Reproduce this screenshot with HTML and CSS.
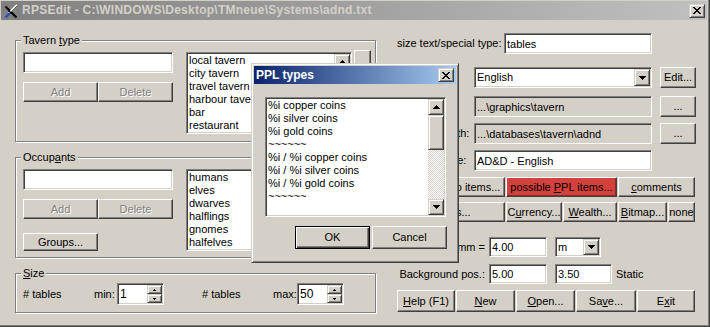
FILE: index.html
```html
<!DOCTYPE html>
<html lang="en">

<head>
	<meta charset="UTF-8">
	<title>RPSEdit</title>
	<link rel="stylesheet" href="styles.css">
</head>

<body>
	<div class="window">
		<div class="titlebar inactive">
			<svg class="app-icon" width="16" height="16" viewBox="0 0 16 16">
				<path d="M2.5 3.5l11 11" stroke="#000" stroke-width="2.2" />
				<path d="M14 2L6 10" stroke="#f4f4f4" stroke-width="2" />
				<path d="M14.5 2.5L6.5 10.5" stroke="#606060" stroke-width="1" />
				<path d="M5.5 7.5l3 3" stroke="#000" stroke-width="1.5" />
				<path d="M6.5 10.5L2.5 14.5" stroke="#2848c8" stroke-width="2.4" />
			</svg>
			<span class="title">RPSEdit - C:\WINDOWS\Desktop\TMneue\Systems\adnd.txt</span>
			<button class="caption-btn">
				<svg width="8" height="7" viewBox="0 0 8 7"><path d="M0 0h2v1H0zM6 0h2v1H6zM1 1h2v1H1zM5 1h2v1H5zM2 2h4v1H2zM3 3h2v1H3zM2 4h4v1H2zM1 5h2v1H1zM5 5h2v1H5zM0 6h2v1H0zM6 6h2v1H6z" /></svg>
			</button>
		</div>

		<div class="client">
			<div class="left">
				<div class="group tavern">
					<div class="group-title">Tavern <u>t</u>ype</div>
					<div class="group-body">
						<div class="entry">
							<input class="edit" type="text">
							<div class="pair">
								<button class="btn" disabled>Add</button>
								<button class="btn" disabled>Delete</button>
							</div>
						</div>
						<div class="list">
							<ul>
								<li>local tavern</li>
								<li>city tavern</li>
								<li>travel tavern</li>
								<li>harbour tavern</li>
								<li>bar</li>
								<li>restaurant</li>
							</ul>
							<div class="vscroll">
								<div class="sb-btn"><svg width="7" height="4" viewBox="0 0 7 4"><path d="M3 0h1v1H3zM2 1h3v1H2zM1 2h5v1H1zM0 3h7v1H0z" /></svg></div>
								<div class="sb-thumb"></div>
								<div class="sb-track"></div>
								<div class="sb-btn"><svg width="7" height="4" viewBox="0 0 7 4"><path d="M0 0h7v1H0zM1 1h5v1H1zM2 2h3v1H2zM3 3h1v1H3z" /></svg></div>
							</div>
						</div>
						<button class="btn side"></button>
					</div>
				</div>

				<div class="group occupants">
					<div class="group-title">Occup<u>a</u>nts</div>
					<div class="group-body">
						<div class="entry">
							<input class="edit" type="text">
							<div class="pair">
								<button class="btn" disabled>Add</button>
								<button class="btn" disabled>Delete</button>
							</div>
							<button class="btn groups">Groups...</button>
						</div>
						<div class="list">
							<ul>
								<li>humans</li>
								<li>elves</li>
								<li>dwarves</li>
								<li>halflings</li>
								<li>gnomes</li>
								<li>halfelves</li>
							</ul>
						</div>
					</div>
				</div>

				<div class="group size">
					<div class="group-title"><u>S</u>ize</div>
					<div class="size-row">
						<span class="sz-cap"># tables</span>
						<span class="sz-lbl">min:</span>
						<div class="spin">
							<span class="value">1</span>
							<div class="spin-btns">
								<div class="spin-btn"><svg width="3" height="2" viewBox="0 0 3 2"><path d="M1 0h1v1H1zM0 1h3v1H0z" /></svg></div>
								<div class="spin-btn"><svg width="3" height="2" viewBox="0 0 3 2"><path d="M0 0h3v1H0zM1 1h1v1H1z" /></svg></div>
							</div>
						</div>
						<span class="sz-cap second"># tables</span>
						<span class="sz-lbl wide">max:</span>
						<div class="spin">
							<span class="value">50</span>
							<div class="spin-btns">
								<div class="spin-btn"><svg width="3" height="2" viewBox="0 0 3 2"><path d="M1 0h1v1H1zM0 1h3v1H0z" /></svg></div>
								<div class="spin-btn"><svg width="3" height="2" viewBox="0 0 3 2"><path d="M0 0h3v1H0zM1 1h1v1H1z" /></svg></div>
							</div>
						</div>
					</div>
				</div>
			</div>

			<div class="right">
				<div class="row">
					<span class="lbl-type">size text/special type:</span>
					<input class="edit field-long" type="text" value="tables">
				</div>
				<div class="row mt13">
					<span class="lbl-path">Language:</span>
					<div class="combo field-wide">
						<span class="combo-text">English</span>
						<div class="drop-btn"><svg width="7" height="4" viewBox="0 0 7 4"><path d="M0 0h7v1H0zM1 1h5v1H1zM2 2h3v1H2zM3 3h1v1H3z" /></svg></div>
					</div>
					<button class="btn btn-small">Edit...</button>
				</div>
				<div class="row mt8">
					<span class="lbl-path">Graphics:</span>
					<input class="edit readonly field-wide" type="text" value="...\graphics\tavern" readonly>
					<button class="btn btn-small">...</button>
				</div>
				<div class="row mt6">
					<span class="lbl-path">Data files path:</span>
					<input class="edit readonly field-wide" type="text" value="...\databases\tavern\adnd" readonly>
					<button class="btn btn-small">...</button>
				</div>
				<div class="row mt6">
					<span class="lbl-path short">System name:</span>
					<input class="edit field-wide" type="text" value="AD&amp;D - English">
				</div>
				<div class="btn-row items mt6">
					<button class="btn">possible info items...</button>
					<button class="btn red">possible <u>P</u>PL items...</button>
					<button class="btn"><u>c</u>omments</button>
				</div>
				<div class="btn-row extras mt5">
					<button class="btn">Drinks...</button>
					<button class="btn">C<u>u</u>rrency...</button>
					<button class="btn"><u>W</u>ealth...</button>
					<button class="btn"><u>B</u>itmap...</button>
					<button class="btn">none</button>
				</div>
				<div class="row mt15">
					<span class="lbl-num">in mm =</span>
					<input class="edit num" type="text" value="4.00">
					<div class="combo unit">
						<span class="combo-text">m</span>
						<div class="drop-btn"><svg width="7" height="4" viewBox="0 0 7 4"><path d="M0 0h7v1H0zM1 1h5v1H1zM2 2h3v1H2zM3 3h1v1H3z" /></svg></div>
					</div>
				</div>
				<div class="row mt7">
					<span class="lbl-num">Background pos.:</span>
					<input class="edit num" type="text" value="5.00">
					<input class="edit num second" type="text" value="3.50">
					<span class="static">Static</span>
				</div>
				<div class="btn-row actions mt6">
					<button class="btn"><u>H</u>elp (F1)</button>
					<button class="btn"><u>N</u>ew</button>
					<button class="btn"><u>O</u>pen...</button>
					<button class="btn">Sa<u>v</u>e...</button>
					<button class="btn">E<u>x</u>it</button>
				</div>
			</div>
		</div>

		<div class="dialog">
			<div class="titlebar active">
				<span class="title">PPL types</span>
				<button class="caption-btn">
					<svg width="8" height="7" viewBox="0 0 8 7"><path d="M0 0h2v1H0zM6 0h2v1H6zM1 1h2v1H1zM5 1h2v1H5zM2 2h4v1H2zM3 3h2v1H3zM2 4h4v1H2zM1 5h2v1H1zM5 5h2v1H5zM0 6h2v1H0zM6 6h2v1H6z" /></svg>
				</button>
			</div>
			<div class="dialog-body">
				<div class="list ppl">
					<ul>
						<li>%i copper coins</li>
						<li>%i silver coins</li>
						<li>%i gold coins</li>
						<li>~~~~~~</li>
						<li>%i / %i copper coins</li>
						<li>%i / %i silver coins</li>
						<li>%i / %i gold coins</li>
						<li>~~~~~~</li>
					</ul>
					<div class="vscroll">
						<div class="sb-btn"><svg width="7" height="4" viewBox="0 0 7 4"><path d="M3 0h1v1H3zM2 1h3v1H2zM1 2h5v1H1zM0 3h7v1H0z" /></svg></div>
						<div class="sb-thumb"></div>
						<div class="sb-track"></div>
						<div class="sb-btn"><svg width="7" height="4" viewBox="0 0 7 4"><path d="M0 0h7v1H0zM1 1h5v1H1zM2 2h3v1H2zM3 3h1v1H3z" /></svg></div>
					</div>
				</div>
				<div class="dialog-buttons">
					<button class="btn default">OK</button>
					<button class="btn">Cancel</button>
				</div>
			</div>
		</div>
	</div>
</body>

</html>
```

FILE: styles.css
```css
* {
	box-sizing: border-box;
	margin: 0;
	padding: 0;
}

html,
body {
	width: 710px;
	height: 327px;
	overflow: hidden;
}

body {
	background: #d4d0c8;
	font-family: 'Liberation Sans', Arial, sans-serif;
	font-size: 11px;
	line-height: 13px;
	color: #000;
}

button,
input {
	font: inherit;
	color: inherit;
	outline: none;
}

svg {
	display: block;
	shape-rendering: crispEdges;
}

.window {
	position: relative;
	width: 710px;
	height: 327px;
	padding: 1px 2px 2px 1px;
	background: #d4d0c8;
	border-right: 1px solid #404040;
	border-bottom: 1px solid #404040;
	box-shadow: inset -1px -1px #808080;
}

/* title bars */
.titlebar {
	display: flex;
	align-items: center;
	height: 19px;
	padding: 0 2px;
	font-size: 12px;
	font-weight: bold;
}

.titlebar.inactive {
	background: linear-gradient(to right, #808080, #c0c0c0);
	color: #d4d0c8;
	letter-spacing: .25px;
}

.titlebar.active {
	height: 18px;
	background: linear-gradient(to right, #0a246a, #a6caf0);
	color: #fff;
}

.app-icon {
	width: 16px;
	height: 16px;
	margin-right: 3px;
	shape-rendering: auto;
}

.title {
	flex: 1;
	white-space: nowrap;
	overflow: hidden;
}

.caption-btn {
	display: flex;
	align-items: center;
	justify-content: center;
	width: 16px;
	height: 14px;
	padding: 0 1px 0 0;
}

/* 3d borders */
.caption-btn,
.sb-btn,
.sb-thumb,
.spin-btn,
.drop-btn {
	background: #d4d0c8;
	border: 1px solid;
	border-color: #d4d0c8 #404040 #404040 #d4d0c8;
	box-shadow: inset 1px 1px #fff, inset -1px -1px #808080;
}

.btn {
	height: 20px;
	padding: 0;
	text-align: center;
	white-space: nowrap;
	background: #d4d0c8;
	border: 1px solid;
	border-color: #fff #404040 #404040 #fff;
	box-shadow: inset -1px -1px #808080;
}

.btn:disabled {
	color: #808080;
	text-shadow: 1px 1px 0 #fff;
}

.btn.red {
	background: #d2413c;
	box-shadow: inset -1px -1px #8c2a26;
}

.btn.default {
	border-color: #000;
	box-shadow: inset 1px 1px #fff, inset -1px -1px #404040, inset -2px -2px #808080;
}

.edit,
.list,
.combo,
.spin {
	background: #fff;
	border: 1px solid;
	border-color: #808080 #fff #fff #808080;
	box-shadow: inset 1px 1px #404040, inset -1px -1px #d4d0c8;
}

.edit {
	height: 21px;
	padding: 0 2px;
}

.edit.readonly {
	background: #d4d0c8;
}

/* group boxes */
.client {
	display: flex;
}

.left {
	width: 361px;
	margin-left: 14px;
}

.group {
	width: 361px;
	padding: 0 0 7px 7px;
	border: 1px solid #808080;
	box-shadow: inset 1px 1px #fff, 1px 1px #fff;
}

.group.tavern {
	margin-top: 20px;
}

.group.occupants {
	margin-top: 15px;
	padding-bottom: 6px;
}

.group.size {
	margin-top: 15px;
}

.group-title {
	width: max-content;
	height: 13px;
	margin: -7px 0 0 -2px;
	padding: 0 2px;
	background: #d4d0c8;
}

.group-body {
	display: flex;
	align-items: flex-start;
	margin-top: 5px;
}

.entry {
	width: 150px;
}

.entry .edit {
	width: 150px;
}

.pair {
	display: flex;
	margin-top: 9px;
}

.pair .btn {
	width: 75px;
}

.btn.groups {
	display: block;
	width: 75px;
	height: 18px;
	margin-top: 14px;
}

.list {
	display: flex;
	width: 166px;
	height: 82px;
	margin-left: 13px;
	padding: 1px;
}

.list ul {
	flex: 1;
	list-style: none;
	padding-left: 1px;
	overflow: hidden;
	white-space: nowrap;
}

.btn.side {
	width: 17px;
	height: 24px;
	margin: -2px 0 0 2px;
}

.vscroll {
	display: flex;
	flex-direction: column;
	width: 16px;
}

.sb-btn {
	display: flex;
	align-items: center;
	justify-content: center;
	height: 16px;
	flex: none;
}

.sb-thumb {
	height: 35px;
	flex: none;
}

.sb-track {
	flex: 1;
	background: repeating-conic-gradient(#fff 0 25%, #d4d0c8 0 50%) 0 0 / 2px 2px;
}

/* size group */
.size-row {
	display: flex;
	align-items: center;
	height: 22px;
	margin-top: 3px;
}

.sz-cap {
	width: 71px;
	white-space: nowrap;
}

.sz-cap.second {
	margin-left: 38px;
}

.sz-lbl {
	width: 19px;
	text-align: right;
	white-space: nowrap;
}

.sz-lbl.wide {
	width: 20px;
}

.spin {
	display: flex;
	width: 47px;
	height: 22px;
	margin-left: 4px;
	padding: 1px;
}

.spin .value {
	flex: 1;
	display: flex;
	align-items: center;
	padding-left: 1px;
	font-size: 12px;
}

.spin-btns {
	display: flex;
	flex-direction: column;
	width: 15px;
}

.spin-btn {
	flex: 1;
	display: flex;
	align-items: center;
	justify-content: center;
}

/* right column */
.right {
	display: flex;
	flex-direction: column;
	width: 300px;
	margin-left: 20px;
	padding-top: 13px;
}

.row {
	display: flex;
	align-items: center;
}

.mt5 { margin-top: 5px; }
.mt6 { margin-top: 6px; }
.mt7 { margin-top: 7px; }
.mt8 { margin-top: 8px; }
.mt13 { margin-top: 13px; }
.mt15 { margin-top: 15px; }

.lbl-type {
	width: 108px;
	padding-left: 1px;
	white-space: nowrap;
}

.lbl-path {
	width: 78px;
	white-space: nowrap;
}

.lbl-path.short {
	width: 66px;
	margin-right: 12px;
	text-align: right;
}

.lbl-num {
	width: 89px;
	text-align: right;
	white-space: nowrap;
}

.field-long {
	width: 148px;
}

.field-wide {
	width: 178px;
}

.btn-small {
	width: 36px;
	height: 21px;
	margin-left: 8px;
}

.combo {
	display: flex;
	align-items: stretch;
	height: 21px;
	padding: 1px;
}

.combo-text {
	flex: 1;
	display: flex;
	align-items: center;
	padding-left: 1px;
}

.drop-btn {
	display: flex;
	align-items: center;
	justify-content: center;
	width: 16px;
}

.combo.unit {
	width: 46px;
	height: 20px;
	margin-left: 8px;
}

.edit.num {
	width: 58px;
	height: 20px;
	margin-left: 4px;
}

.edit.num.second {
	width: 57px;
	margin-left: 8px;
}

.static {
	margin-left: 4px;
}

.btn-row {
	display: grid;
	column-gap: 1px;
}

.btn-row.items {
	grid-template-columns: 109px 111px 77px;
}

.btn-row.extras {
	grid-template-columns: 109px 56px 54px 49px 27px;
}

.btn-row.actions {
	grid-template-columns: 58px 59px 59px 60px 58px;
	margin-left: 1px;
}

.btn-row.actions .btn {
	height: 22px;
}

/* PPL types dialog */
.dialog {
	position: absolute;
	left: 251px;
	top: 63px;
	width: 208px;
	height: 200px;
	padding: 2px;
	background: #d4d0c8;
	border: 1px solid;
	border-color: #d4d0c8 #404040 #404040 #d4d0c8;
	box-shadow: inset 1px 1px #fff, inset -1px -1px #808080;
}

.dialog-body {
	padding-left: 11px;
}

.list.ppl {
	width: 181px;
	height: 120px;
	margin: 13px 0 0 0;
}

.dialog-buttons {
	display: flex;
	gap: 2px;
	margin: 9px 0 0 30px;
}

.dialog-buttons .btn {
	width: 75px;
	height: 23px;
}
```
